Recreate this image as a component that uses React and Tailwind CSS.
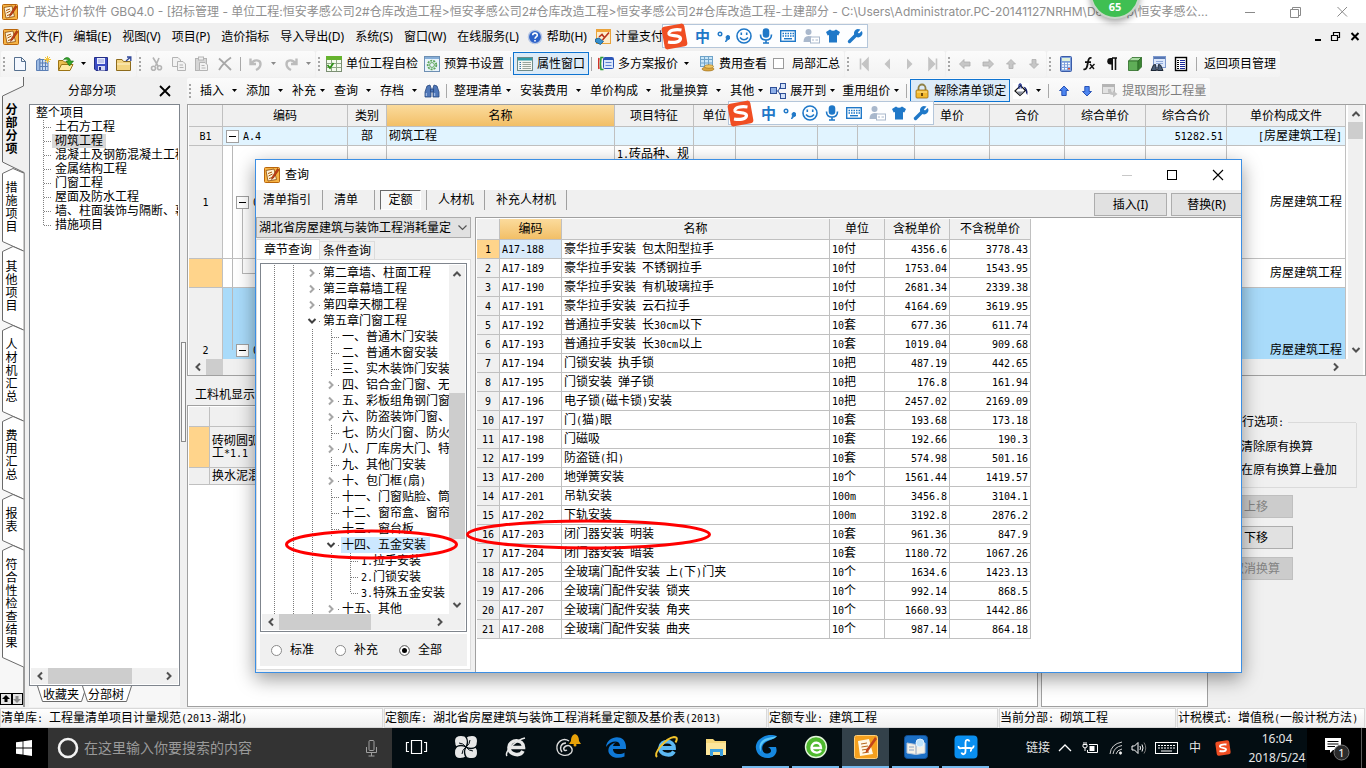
import clsx from 'clsx';

const INK = '#1f78c8';

// 16x16 glyphs used by the toolbars
const ICONS = {
    app: (
        <>
            <rect x="0.5" y="0.5" width="15" height="15" rx="1" fill="#f6b344" stroke="#b9650a" />
            <path d="M2 3.5 L10 2 L12.5 12.5 L4 14 Z" fill="#fff3d6" stroke="#8a4a0c" strokeWidth="0.8" />
            <path d="M4 6.5 l4 -1.5 M4.5 9 l4 -2 M5 11.5 l5 -1.5" stroke="#a8560e" strokeWidth="1" />
            <path d="M13.5 1.5 L8 10 L7.5 12.5 L9.5 11 L15 3 Z" fill="#c43d12" stroke="#7c2608" strokeWidth="0.5" />
        </>
    ),
    page: <path d="M2.5 1.5 H9.5 L13.5 5.5 V14.5 H2.5 Z M9.5 1.5 V5.5 H13.5" fill="#f4f8ff" stroke="#56708f" />,
    building: (
        <>
            <path d="M1.5 4.5 L5 2.5 V14.5 H1.5 Z" fill="#9dbbe3" stroke="#5b7fb5" />
            <rect x="5" y="3.5" width="8" height="11" fill="#c8dcf5" stroke="#5b7fb5" />
            <path d="M7.5 4 V14 M10.5 4 V14 M5 7 H13 M5 10.5 H13" stroke="#5b7fb5" />
            <path d="M12.5 0 V7 M9 3.5 H16 M10 1 L15 6 M15 1 L10 6" stroke="#f2c53a" />
        </>
    ),
    open: (
        <>
            <path d="M0.5 14 V4.5 H5 L6.5 6 H12 V14 Z" fill="#e9bd4f" stroke="#9c7414" />
            <path d="M0.5 14.5 L3.5 8.5 H15 L12 14.5 Z" fill="#ffe9a3" stroke="#9c7414" />
            <path d="M5.5 3.5 C8 0.5 12 1 12.5 5 H15.5 L11.5 10 L8 5 H10.3 C10 3.3 8 2.8 5.5 3.5 Z" fill="#33a62b" stroke="#146a10" strokeWidth="0.6" />
        </>
    ),
    save: (
        <>
            <path d="M1.5 1.5 H14.5 V14.5 H3 L1.5 13 Z" fill="#3d4ec4" stroke="#242e86" />
            <rect x="4" y="2" width="8" height="6" fill="#e8ecff" />
            <path d="M5 4 H11 M5 6 H11" stroke="#9aa3d6" />
            <rect x="5" y="10" width="7" height="4.5" fill="#d5d9f2" />
            <rect x="6" y="11" width="2" height="3" fill="#242e86" />
        </>
    ),
    folder: (
        <>
            <path d="M0.5 14.5 V3.5 H6 L7.5 5.5 H14.5 V14.5 Z" fill="#f3d481" stroke="#8d6b1c" />
            <path d="M1 8 H14" stroke="#fff3cc" />
            <path d="M10 5 L14 1.5 M11 1 H14.8 V5" fill="none" stroke="#334a9a" strokeWidth="1.4" />
        </>
    ),
    cut: (
        <g fill="none" stroke="#b4b4b4" strokeWidth="1.6">
            <path d="M5 1.5 L10 10 M11 2 L7.5 10" />
            <circle cx="5.5" cy="12.3" r="2" />
            <circle cx="11.5" cy="11.8" r="2" />
        </g>
    ),
    copy: (
        <g fill="#f2f2f2" stroke="#b4b4b4">
            <path d="M1.5 1.5 H7 L9.5 4 V10.5 H1.5 Z" />
            <path d="M6.5 5.5 H12 L14.5 8 V14.5 H6.5 Z M8.5 9 H12 M8.5 11.5 H12.5" />
        </g>
    ),
    paste: (
        <g fill="#f2f2f2" stroke="#b4b4b4">
            <rect x="1.5" y="2.5" width="11" height="12" fill="#d6d6d6" />
            <rect x="4.5" y="1" width="5" height="3" />
            <path d="M5.5 6.5 H11 L13.5 9 V14.5 H5.5 Z M7.5 9.5 H10.5 M7.5 12 H11.5" />
        </g>
    ),
    remove: <path d="M2 2.5 C6 6 10 10 14 14 M14 1.5 C9 5 5 9 2 14" fill="none" stroke="#a8a8a8" strokeWidth="1.8" />,
    undo: <path d="M2.5 2.5 V8 H8 M3.5 7.5 C6 3 12.5 3.5 12.5 8 C12.5 10.5 11 12.5 8 14" fill="none" stroke="#bcbcbc" strokeWidth="2.4" />,
    redo: <path d="M13.5 2.5 V8 H8 M12.5 7.5 C10 3 3.5 3.5 3.5 8 C3.5 10.5 5 12.5 8 14" fill="none" stroke="#bcbcbc" strokeWidth="2.4" />,
    check: (
        <>
            <rect x="0.5" y="0.5" width="15" height="15" fill="#f4fbee" stroke="#7c8f74" />
            <rect x="0" y="0" width="16" height="4" fill="#66b32e" />
            <path d="M1 7.5 H15 M1 11.5 H15 M5.5 4 V15 M10.5 4 V15" stroke="#8fa886" />
            <path d="M1.5 9 L4 12 L7.5 7" fill="none" stroke="#2f9216" strokeWidth="1.8" />
        </>
    ),
    gear: (
        <>
            <rect x="0.5" y="0.5" width="15" height="15" fill="#e9f3fb" stroke="#6d8fb3" />
            <path d="M1 2 H15" stroke="#86aed8" strokeWidth="2" />
            <circle cx="8" cy="9" r="4.3" fill="none" stroke="#5ca657" strokeWidth="1.8" strokeDasharray="2 1" />
            <circle cx="8" cy="9" r="2.4" fill="none" stroke="#5ca657" />
        </>
    ),
    props: (
        <>
            <rect x="0.5" y="1.5" width="15" height="13" fill="#f5f6f2" stroke="#6e8b88" />
            <rect x="1" y="2" width="14" height="2.5" fill="#2c9aa8" />
            <path d="M2.5 6.5 H4 M2.5 8.5 H4 M2.5 10.5 H4 M2.5 12.5 H4" stroke="#3a78a8" />
            <path d="M5.5 6.5 H14 M5.5 8.5 H14 M5.5 10.5 H14 M5.5 12.5 H14" stroke="#98a39a" />
        </>
    ),
    plans: (
        <>
            <path d="M1 2 Q0 8 1 13" fill="none" stroke="#d2332a" strokeWidth="1.6" />
            <path d="M5.5 1.5 H3 Q2 8 3 13.5 H5.5" fill="none" stroke="#2f9a3a" strokeWidth="1.6" />
            <rect x="5.5" y="1.5" width="10" height="11" rx="1" fill="#dbe7fb" stroke="#2c56b8" />
            <path d="M6 3 H15" stroke="#2c56b8" strokeWidth="2" />
            <path d="M7.5 6.5 H13.5 M7.5 9.5 H13.5" stroke="#5f84cf" />
        </>
    ),
    fee: (
        <>
            <rect x="1.5" y="0.5" width="12" height="10" fill="#c9e6f8" stroke="#6fa3c9" />
            <path d="M1.5 3.5 H13.5 M1.5 7 H13.5 M5.5 1 V10 M9.5 1 V10" stroke="#6fa3c9" />
            <ellipse cx="9" cy="13" rx="6" ry="2" fill="#d9a640" stroke="#9a6a14" strokeWidth="0.6" />
            <ellipse cx="10" cy="10.5" rx="4.5" ry="1.8" fill="#f0c763" stroke="#9a6a14" strokeWidth="0.6" />
        </>
    ),
    first: <path d="M4.5 2.5 V13.5 M12 2.5 L6.5 8 L12 13.5 Z" fill="#c4c4c4" stroke="#c4c4c4" strokeWidth="1.6" />,
    prev: <path d="M11 2.5 L5.5 8 L11 13.5 Z" fill="#c4c4c4" />,
    next: <path d="M5 2.5 L10.5 8 L5 13.5 Z" fill="#c4c4c4" />,
    last: <path d="M11.5 2.5 V13.5 M4 2.5 L9.5 8 L4 13.5 Z" fill="#c4c4c4" stroke="#c4c4c4" strokeWidth="1.6" />,
    left: <path d="M2.5 8 L7 3.5 V6 H13 V10 H7 V12.5 Z" fill="#c6c6c6" stroke="#adadad" strokeWidth="0.8" />,
    right: <path d="M13.5 8 L9 3.5 V6 H3 V10 H9 V12.5 Z" fill="#c6c6c6" stroke="#adadad" strokeWidth="0.8" />,
    up: <path d="M8 3.5 L12.5 8 H10 V12.5 H6 V8 H3.5 Z" fill="#c6c6c6" stroke="#adadad" strokeWidth="0.8" />,
    down: <path d="M8 12.5 L12.5 8 H10 V3.5 H6 V8 H3.5 Z" fill="#c6c6c6" stroke="#adadad" strokeWidth="0.8" />,
    calc: (
        <>
            <rect x="2.5" y="0.5" width="11" height="15" rx="1" fill="#7d9fdc" stroke="#3a5ba8" />
            <rect x="4" y="2" width="8" height="3" fill="#dff0d8" />
            <path d="M4 7.5 H12 M4 10 H12 M4 12.8 H12" stroke="#fff" strokeWidth="1.6" strokeDasharray="2 1" />
            <path d="M10 12.8 H12" stroke="#d64a3a" strokeWidth="1.6" />
        </>
    ),
    fx: (
        <g fill="none" stroke="#111">
            <path d="M10.5 2.2 C8.5 1 7.5 3 7 6 C6.4 10 5.5 14.5 2.5 13.2 M4 6.2 H10" strokeWidth="1.8" />
            <path d="M9 8 L13 13 M13.5 8 L8.5 13" strokeWidth="1.4" />
        </g>
    ),
    para: (
        <>
            <path d="M8 2 H13 M8.2 2 V14 M11.5 2 V14" stroke="#111" strokeWidth="1.6" />
            <path d="M8.5 2 H6.5 A3 3 0 0 0 6.5 8.5 H8.5 Z" fill="#111" />
        </>
    ),
    cube: (
        <g stroke="#2c6b26" strokeWidth="0.8">
            <path d="M1.5 5 L5 1.5 H14.5 L11 5 Z" fill="#a9dba2" />
            <path d="M1.5 5 H11 V14.5 H1.5 Z" fill="#5fae57" />
            <path d="M11 5 L14.5 1.5 V11 L11 14.5 Z" fill="#3a8432" />
        </g>
    ),
    find: (
        <>
            <rect x="3.5" y="0.5" width="12" height="11" fill="#dce8fb" stroke="#7c98cc" />
            <path d="M4 2 H15" stroke="#5878b4" strokeWidth="2" />
            <path d="M6 5.5 H13 M6 7.5 H13" stroke="#8ea8d8" />
            <path d="M3.5 9 L5.5 8.5 L6.5 14.5 H1 Z M10.5 9 L8.5 8.5 L7.5 14.5 H13 Z" fill="#4b5f78" stroke="#1d2736" />
        </>
    ),
    list: (
        <>
            <rect x="2.5" y="1.5" width="11" height="13" fill="#fff" stroke="#000" strokeWidth="1.4" />
            <path d="M4 4.5 H6 M4 6.5 H6 M4 8.5 H6 M4 10.5 H6 M4 12.5 H6" stroke="#000" />
            <path d="M7 4.5 H12 M7 6.5 H12 M7 8.5 H12 M7 10.5 H12 M7 12.5 H12" stroke="#1a2a9a" />
        </>
    ),
    binoculars: (
        <g fill="#4f77b8" stroke="#27467e" strokeWidth="0.8">
            <path d="M3 3 L6 2 L7 5 V14 H1 V9 Z" />
            <path d="M13 3 L10 2 L9 5 V14 H15 V9 Z" />
            <path d="M6.5 6 H9.5 V9 H6.5 Z" />
            <path d="M2.3 10 V13 M10.7 10 V13" stroke="#c9dcf8" />
        </g>
    ),
    expand: (
        <g stroke="#2f4f96">
            <path d="M5 8 H8 M8 8 L11 3 M8 8 L11 13" fill="none" />
            <rect x="0.5" y="4.5" width="6" height="6" fill="#8fb0e8" />
            <rect x="10.5" y="0.5" width="5" height="5" fill="#cfdff8" />
            <rect x="10.5" y="10.5" width="5" height="5" fill="#cfdff8" />
        </g>
    ),
    lock: (
        <>
            <path d="M4.5 8 V5 A3.5 3.5 0 0 1 11.5 5 V8" fill="none" stroke="#8f8148" strokeWidth="1.8" />
            <rect x="2" y="7" width="12" height="8" rx="1" fill="#f2b92e" stroke="#9a6a10" strokeWidth="0.8" />
            <path d="M3 9 H13" stroke="#ffe391" />
            <path d="M8 10 V13" stroke="#5e3d06" strokeWidth="1.8" />
        </>
    ),
    bucket: (
        <>
            <rect width="16" height="16" fill="#fff" />
            <path d="M2 8 L7.5 2.5 L12.5 7.5 L7 12.5 Z" fill="#fff" stroke="#111" strokeWidth="1.2" />
            <path d="M3.5 8.5 H11.5 L7 12 Z" fill="#8a8f9c" />
            <path d="M6 6 V2 Q7 0 8.2 1.8 V5.5" fill="none" stroke="#1c2f8c" strokeWidth="1.2" />
            <path d="M10.5 3.5 Q15.5 5 14.3 12 Q12.5 10 12.8 7.5 Z" fill="#14206e" />
        </>
    ),
    blueUp: <path d="M8 3 L12.5 7.5 H10.2 V12.5 H5.8 V7.5 H3.5 Z" fill="#4e86f0" stroke="#1c47b0" strokeWidth="0.9" />,
    blueDown: <path d="M8 13 L12.5 8.5 H10.2 V3.5 H5.8 V8.5 H3.5 Z" fill="#4e86f0" stroke="#1c47b0" strokeWidth="0.9" />,
    extract: (
        <>
            <rect x="0.5" y="1.5" width="12" height="9" fill="#e2e2e2" stroke="#b5b5b5" />
            <path d="M1 3 H12" stroke="#b5b5b5" strokeWidth="2" />
            <path d="M6 6 V9 Q7 12 11 12 V14.5 L15.5 11 L11 7.5 V9.5 Q9 9.5 9 6 Z" fill="#c2c2c2" />
        </>
    ),
    help: (
        <>
            <circle cx="8" cy="8" r="6.6" fill="#2d62c8" stroke="#b9c8e4" strokeWidth="1.4" />
            <path d="M5.7 6.3 C5.7 3.3 10.4 3.4 10.3 6.2 C10.2 8 8 7.8 8 9.8 M8 11 V12.5" fill="none" stroke="#fff" strokeWidth="1.6" />
        </>
    ),
    pay: (
        <>
            <rect x="1.5" y="0.5" width="14" height="14" fill="#fdeccc" stroke="#e9a23a" />
            <path d="M2 2 H15" stroke="#f2a63a" strokeWidth="2" />
            <path d="M4 8 L7 5.5 L9 8 M14 3.5 L7.5 11" fill="none" stroke="#b8321a" strokeWidth="1.6" />
            <path d="M0.5 10 L4 9 L8.5 12.5 L5.5 15.5 L0.5 13 Z" fill="#3590cf" stroke="#145a8c" strokeWidth="0.8" />
        </>
    ),
};

function Icon({ name, size = 16, className }) {
    return (
        <svg width={size} height={size} viewBox="0 0 16 16" className={clsx('shrink-0', className)} aria-hidden="true">
            {ICONS[name]}
        </svg>
    );
}

// Song-style text: latin runs are half as wide as the hanzi
function Song({ children }) {
    return (
        <span>
            {String(children).split(/([\x20-\x7e]+)/).map((part, i) =>
                i % 2 ? (
                    <span key={i} className="whitespace-pre font-[family-name:'DejaVu_Sans_Mono','Noto_Sans_CJK_SC',monospace] text-[10px]">{part}</span>
                ) : part
            )}
        </span>
    );
}

const Caret = ({ color = '#000' }) => (
    <svg width="5" height="3" viewBox="0 0 5 3" className="shrink-0" aria-hidden="true">
        <path d="M0 0 H5 L2.5 3 Z" fill={color} />
    </svg>
);

const Grip = () => (
    <svg width="2" height="14" viewBox="0 0 2 14" className="shrink-0" aria-hidden="true">
        <path d="M1 0 V14" stroke="#a6a6a6" strokeWidth="2" strokeDasharray="2 2" />
    </svg>
);

const Sep = () => <span className="h-[14px] w-px shrink-0 bg-[#a8a8a8]" />;

function Band({ className, children }) {
    return (
        <div className={clsx('flex h-[26px] shrink-0 items-center rounded-xs bg-linear-to-b from-[#fbfbfb] to-[#f3f3f3] pr-1 pl-[2px]', className)}>
            <Grip />
            {children}
        </div>
    );
}

function Tool({ icon, label, className }) {
    return (
        <button type="button" aria-label={label || icon} className={clsx('flex shrink-0 items-center gap-1 whitespace-nowrap', className)}>
            {icon && <Icon name={icon} />}
            {label}
        </button>
    );
}

function Drop({ label, icon, tight, className }) {
    return (
        <button type="button" className={clsx('flex shrink-0 items-center whitespace-nowrap', tight ? 'gap-1' : 'gap-2', className)}>
            {icon && <Icon name={icon} />}
            {label}
            <Caret />
        </button>
    );
}

const ACTIVE = 'h-[23px] border border-[#0f74d1] bg-[#dcebf8] px-[3px]';

// "‹" style arrow of the scroll bars
const TURN = { left: 'rotate-90', right: '-rotate-90', up: 'rotate-180', down: '' };
function Chevron({ dir, color = '#505050' }) {
    return (
        <svg width="10" height="10" viewBox="0 0 10 10" className={clsx('shrink-0', TURN[dir])} aria-hidden="true">
            <path d="M1.5 3 L5 6.5 L8.5 3" fill="none" stroke={color} strokeWidth="2" />
        </svg>
    );
}

function HScroll({ thumb, className }) {
    return (
        <div className={clsx('flex h-4 shrink-0 items-center bg-[#f0f0f0] px-1', className)}>
            <Chevron dir="left" />
            <div className="flex h-full flex-1 px-[3px]">
                <span className={clsx('h-full bg-[#cdcdcd]', thumb)} />
            </div>
            <Chevron dir="right" />
        </div>
    );
}

function ImeBar({ className }) {
    return (
        <div className={clsx('absolute z-30 flex h-[24px] items-center border border-[#b4c6da] bg-[#fdfeff] pr-1', className)}>
            <svg width="29" height="29" viewBox="0 0 29 29" className="-ml-[3px] shrink-0" aria-hidden="true">
                <rect x="3" y="3" width="23" height="23" rx="3" fill="#f04e23" transform="rotate(-10 14.5 14.5)" />
                <path d="M21.5 8 C15 7 8 8.5 9 12 C10 14.5 20.5 12.5 20.5 16.5 C20.5 20.5 13 21 8 20" fill="none" stroke="#fff" strokeWidth="3.2" />
            </svg>
            <div className="flex flex-1 items-center justify-between pl-[6px] text-[15px] font-bold text-[#1f78c8]">
                <span>中</span>
                <svg width="13" height="16" viewBox="0 0 13 16" aria-hidden="true">
                    <circle cx="3" cy="6" r="1.8" fill="none" stroke={INK} strokeWidth="1.4" />
                    <path d="M9 9 A2 2 0 1 1 11 11.5 L8.5 14 L9.5 11 Z" fill={INK} stroke={INK} />
                </svg>
                <svg width="16" height="16" viewBox="0 0 16 16" fill="none" stroke={INK} strokeWidth="1.6" aria-hidden="true">
                    <circle cx="8" cy="8" r="7" />
                    <path d="M5.3 4.5 V7 M10.7 4.5 V7 M4 9.5 Q8 14 12 9.5" />
                </svg>
                <svg width="14" height="16" viewBox="0 0 14 16" fill="none" stroke={INK} strokeWidth="1.6" aria-hidden="true">
                    <rect x="4.5" y="1" width="5" height="8" rx="2.5" fill={INK} />
                    <path d="M1.5 6.5 Q1.5 12 7 12 Q12.5 12 12.5 6.5 M7 12 V15 M4 15 H10" />
                </svg>
                <svg width="16" height="12" viewBox="0 0 16 12" aria-hidden="true">
                    <rect x="0.7" y="0.7" width="14.6" height="10.6" fill="#fff" stroke={INK} strokeWidth="1.4" />
                    <path d="M2.5 3.5 H14 M2.5 6 H14" stroke={INK} strokeWidth="1.4" strokeDasharray="1.5 1" />
                    <path d="M4 8.7 H12" stroke={INK} strokeWidth="1.4" />
                </svg>
                <svg width="17" height="16" viewBox="0 0 17 16" aria-hidden="true">
                    <circle cx="5.5" cy="4" r="3" fill="#a9b8cc" />
                    <path d="M0.5 14 Q0.5 8 5.5 8 Q8 8 9 9 V14 Z" fill="#a9b8cc" />
                    <rect x="7.5" y="9" width="9" height="6" fill="#fff" stroke="#a9b8cc" />
                    <path d="M9 12 H11 M12.5 12 H15" stroke="#a9b8cc" />
                </svg>
                <svg width="14" height="14" viewBox="0 0 14 14" aria-hidden="true">
                    <path d="M4 0.5 Q7 3 10 0.5 L14 3 L12.3 6.5 L11 6 V13.5 H3 V6 L1.7 6.5 L0 3 Z" fill={INK} />
                </svg>
                <svg width="16" height="16" viewBox="0 0 16 16" aria-hidden="true">
                    <path d="M2.5 13.5 L9 7" stroke={INK} strokeWidth="3.4" strokeLinecap="round" />
                    <path d="M13.5 1.5 L10.8 4.5 L12 5.5 L14.8 3 A4.2 4.2 0 1 1 10.8 1 L13.5 1.5 Z" fill={INK} />
                </svg>
            </div>
        </div>
    );
}

const MENUS = ['文件(F)', '编辑(E)', '视图(V)', '项目(P)', '造价指标', '导入导出(D)', '系统(S)', '窗口(W)', '在线服务(L)'];

function TitleBar() {
    return (
        <header className="flex h-[23px] shrink-0 items-center bg-white pr-[18px] pl-[2px] text-[#8f8f8f]">
            <Icon name="app" />
            <h1 className="ml-[5px] flex-1 truncate font-[family-name:Inter,'Noto_Sans_CJK_SC',sans-serif]">
                广联达计价软件 GBQ4.0 - [招标管理 - 单位工程:恒安孝感公司2#仓库改造工程&gt;恒安孝感公司2#仓库改造工程&gt;恒安孝感公司2#仓库改造工程-土建部分 - C:\Users\Administrator.PC-20141127NRHM\Desktop\恒安孝感公...
            </h1>
            <svg width="104" height="12" viewBox="0 0 104 12" fill="none" stroke="#8a8a8a" className="ml-[20px] shrink-0" aria-hidden="true">
                <path d="M1 6.5 H11 M93.5 1 L103 10.5 M103 1 L93.5 10.5" />
                <path d="M46.5 3.5 H54.5 V11.5 H46.5 Z M48.5 3 V1.5 H56.5 V9.5 H55" />
            </svg>
        </header>
    );
}

function MenuBar() {
    return (
        <nav className="flex h-[27px] shrink-0 items-center gap-[11px] bg-[#f0f0f0] pr-[6px] pl-[3px]">
            <Icon name="app" className="-mr-[5px]" />
            {MENUS.map((m) => <button type="button" key={m} className="shrink-0">{m}</button>)}
            <Tool icon="help" label="帮助(H)" className="-ml-[3px]" />
            <Tool icon="pay" label="计量支付" className="-ml-[3px]" />
            <svg width="45" height="11" viewBox="0 0 45 11" fill="none" stroke="#000" className="ml-auto shrink-0" aria-hidden="true">
                <path d="M0 9 H6 M36.5 2 L43.5 9 M43.5 2 L36.5 9" strokeWidth="2" />
                <path d="M16.5 4.5 H22.5 V9.5 H16.5 Z M18.5 4 V1.5 H24.5 V6.5 H23" strokeWidth="1.2" />
            </svg>
        </nav>
    );
}

function MainToolbar() {
    return (
        <div className="flex h-[27px] shrink-0 items-center gap-px bg-[#f0f0f0] pl-px">
            <Band className="gap-[7px]">
                <Tool icon="page" />
                <Tool icon="building" />
                <Tool icon="open" />
                <Caret />
                <Tool icon="save" />
                <Tool icon="folder" />
            </Band>
            <Band className="gap-[7px]">
                <Tool icon="cut" />
                <Tool icon="copy" />
                <Tool icon="paste" />
                <Tool icon="remove" />
                <Sep />
                <Tool icon="undo" />
                <Caret color="#8a8a8a" />
                <Tool icon="redo" />
                <Caret color="#8a8a8a" />
            </Band>
            <Band className="gap-[6px]">
                <Tool icon="check" label="单位工程自检" />
                <Tool icon="gear" label="预算书设置" />
                <Sep />
                <Tool icon="props" label="属性窗口" className={clsx(ACTIVE, '-mx-1')} />
                <Sep />
                <Tool icon="plans" label="多方案报价" />
                <Caret />
                <Tool icon="fee" label="费用查看" className="ml-1" />
                <label className="flex shrink-0 items-center gap-2">
                    <input type="checkbox" className="size-[11px] appearance-none border border-[#9a9a9a] bg-white" />
                    局部汇总
                </label>
            </Band>
            <Band className="gap-[7px]">
                <Tool icon="first" />
                <Tool icon="prev" />
                <Tool icon="next" />
                <Tool icon="last" />
            </Band>
            <Band className="gap-[7px]">
                <Tool icon="left" />
                <Tool icon="right" />
                <Tool icon="up" />
                <Tool icon="down" />
            </Band>
            <Band className="gap-[7px]">
                <Tool icon="calc" />
                <Tool icon="fx" />
                <Tool icon="para" />
                <Tool icon="cube" />
                <Tool icon="find" />
                <Tool icon="list" />
                <Sep />
                <Tool label="返回项目管理" />
            </Band>
        </div>
    );
}

function EditToolbar() {
    return (
        <div className="flex h-[27px] shrink-0 items-center bg-[#f0f0f0]">
            <Band className="gap-[9px]">
                <Drop label="插入" />
                <Drop label="添加" />
                <Drop label="补充" tight />
                <Drop label="查询" />
                <Drop label="存档" />
                <div className="-mx-[2px] flex items-center gap-[6px]">
                    <Tool icon="binoculars" />
                    <Sep />
                </div>
                <Drop label="整理清单" tight />
                <Drop label="安装费用" />
                <Drop label="单价构成" />
                <Drop label="批量换算" />
                <Drop label="其他" tight />
                <div className="-ml-[2px] flex items-center gap-[7px]">
                    <Drop icon="expand" label="展开到" tight />
                    <Drop label="重用组价" tight />
                    <Sep />
                    <Tool icon="lock" label="解除清单锁定" className={clsx(ACTIVE, '-mx-1')} />
                    <Tool icon="bucket" />
                    <Caret />
                    <Sep />
                    <Tool icon="blueUp" />
                    <Tool icon="blueDown" />
                    <Tool icon="extract" label="提取图形工程量" className="text-[#7d7d7d]" />
                </div>
            </Band>
        </div>
    );
}

const SIDE_TABS = [
    { text: '措施项目', h: 78 },
    { text: '其他项目', h: 79 },
    { text: '人材机汇总', h: 91 },
    { text: '费用汇总', h: 78 },
    { text: '报表', h: 51 },
    { text: '符合性检查结果', h: 117 },
];

function SideTabs() {
    return (
        <nav className="flex w-[25px] shrink-0 flex-col border-r-2 border-[#9a9a9a] bg-[#f7f7f7]">
            <button type="button" className="relative h-[91px] shrink-0 pt-[12px] font-bold">
                <svg width="25" height="96" viewBox="0 0 25 96" className="absolute top-0 left-0" aria-hidden="true">
                    <path d="M23.5 0 V9 L2.5 19 V85 L24 95.5 H25 V0 Z" fill="#f0f0f0" />
                    <path d="M23.5 0 V9 L2.5 19 V85 L24 95.5" fill="none" stroke="#6a6a6a" />
                </svg>
                <span className="relative mx-auto block w-[12px] leading-[13px] break-all">分部分项</span>
            </button>
            {SIDE_TABS.map(({ text, h }) => (
                <button type="button" key={text} className="relative shrink-0" style={{ height: h }}>
                    <svg width="24" height={h + 6} viewBox={`0 0 24 ${h + 6}`} className="absolute top-0 left-0" aria-hidden="true">
                        <path d={`M23.5 5 L13 0.5 L2.5 5.5 V${h - 4.5} L23.5 ${h + 5}`} fill="#fff" stroke="#6a6a6a" />
                    </svg>
                    <span className="relative mx-auto block w-[12px] leading-[13px] break-all">{text}</span>
                </button>
            ))}
            <div className="mt-auto mb-[2px] flex">
                {['up', 'down'].map((d) => (
                    <button type="button" key={d} aria-label={d} className="flex h-[12px] w-[12px] items-center justify-center border border-black bg-[#e4e4e4]">
                        <svg width="8" height="8" viewBox="0 0 8 8" className={d === 'down' ? 'rotate-180' : ''} aria-hidden="true">
                            <path d="M4 0 L8 4 H5.5 V7 H2.5 V4 H0 Z" fill={d === 'down' ? '#8a8a8a' : '#000'} />
                        </svg>
                    </button>
                ))}
            </div>
        </nav>
    );
}

const SECTIONS = ['土石方工程', '砌筑工程', '混凝土及钢筋混凝土工程', '金属结构工程', '门窗工程', '屋面及防水工程', '墙、柱面装饰与隔断、幕墙工程', '措施项目'];

function SectionPanel() {
    return (
        <aside className="ml-1 flex w-[151px] shrink-0 flex-col">
            <div className="flex h-[27px] shrink-0 items-center">
                <h2 className="flex-1 pl-[39px]">分部分项</h2>
                <button type="button" aria-label="关闭" className="mr-[9px]">
                    <svg width="12" height="12" viewBox="0 0 12 12" aria-hidden="true">
                        <path d="M1 1 L11 11 M11 1 L1 11" stroke="#000" strokeWidth="1.8" />
                    </svg>
                </button>
            </div>
            <div className="flex flex-1 flex-col border border-[#7f858d] bg-white p-px">
                <div className="flex-1 overflow-hidden pl-[5px] leading-[14px] whitespace-nowrap">
                    <p>整个项目</p>
                    <ul>
                        {SECTIONS.map((s, i) => (
                            <li key={s} className="flex h-[14px] items-center">
                                <svg width="16" height="14" viewBox="0 0 16 14" className="shrink-0" aria-hidden="true">
                                    <path d={i === SECTIONS.length - 1 ? 'M7.5 0 V7' : 'M7.5 0 V14'} stroke="#808080" strokeDasharray="1 1" />
                                    <path d="M8 7.5 H16" stroke="#808080" strokeDasharray="1 1" />
                                </svg>
                                <span className={clsx('h-[14px] px-[3px]', s === '砌筑工程' && 'bg-[#d8d8d8]')}>{s}</span>
                            </li>
                        ))}
                    </ul>
                </div>
                <HScroll thumb="w-[84px]" />
            </div>
            <div className="flex h-[21px] shrink-0 items-start bg-[#f7f7f7] pl-2">
                {['收藏夹', '分部树'].map((t) => (
                    <button type="button" key={t} className="relative h-[17px] w-[45px]">
                        <svg width="50" height="17" viewBox="0 0 50 17" className="absolute top-0 left-0" aria-hidden="true">
                            <path d="M0.5 0 L5.5 15.5 H44.5 L49.5 0" fill="#fff" stroke="#6a6a6a" />
                        </svg>
                        <span className="relative pl-[3px] leading-[16px]">{t}</span>
                    </button>
                ))}
            </div>
        </aside>
    );
}

const TH = 'border-r border-b border-[#c0c0c0] bg-[#f0f0f0] p-0 text-center font-normal';
const TD = 'border-r border-b border-[#c0c0c0] p-0';
const HEAD = 'bg-linear-to-b from-[#fbdb9c] to-[#f2bf66]';

const Minus = ({ className }) => (
    <span className={clsx('absolute flex size-[13px] items-center justify-center border border-[#a0a0a0] bg-white', className)}>
        <span className="h-px w-[7px] bg-black" />
    </span>
);

const PRICE_COLS = ['编码', '类别', '名称', '项目特征', '单位', '', '', '', '单价', '合价', '综合单价', '综合合价', '单价构成文件'];

function Blank({ n, className }) {
    return Array.from({ length: n }, (_, i) => <td key={i} className={clsx(TD, className)} />);
}

function PriceGrid() {
    return (
        <section className="flex h-[272px] shrink-0 flex-col border border-[#a0a0a0] bg-white pr-[2px] pl-px">
            <div className="flex min-h-0 flex-1">
                <div className="min-w-0 flex-1 overflow-hidden">
                    <table className="w-full table-fixed border-separate border-spacing-0">
                        <colgroup>
                            <col className="w-[34px]" />
                            <col className="w-[125px]" />
                            <col className="w-[39px]" />
                            <col />
                            <col className="w-[79px]" />
                            <col className="w-[42px]" />
                            <col className="w-[82px]" />
                            <col className="w-[40px]" />
                            <col className="w-[57px]" />
                            <col className="w-[75px]" />
                            <col className="w-[75px]" />
                            <col className="w-[81px]" />
                            <col className="w-[81px]" />
                            <col className="w-[119px]" />
                        </colgroup>
                        <thead>
                            <tr className="h-[22px]">
                                <th className={TH} />
                                {PRICE_COLS.map((c, i) => (
                                    <th key={i} scope="col" className={clsx(TH, c === '名称' && HEAD)}>{c}</th>
                                ))}
                            </tr>
                        </thead>
                        <tbody>
                            <tr className="h-[19px] bg-[#e1f4ff]">
                                <th scope="row" className={TH}><Song>B1</Song></th>
                                <td className={clsx(TD, 'relative pl-[20px]')}>
                                    <Minus className="top-[3px] left-[3px]" />
                                    <Song>A.4</Song>
                                </td>
                                <td className={clsx(TD, 'text-center')}>部</td>
                                <td className={clsx(TD, 'pl-[2px]')}>砌筑工程</td>
                                <Blank n={8} />
                                <td className={clsx(TD, 'pr-[3px] text-right')}><Song>51282.51</Song></td>
                                <td className={clsx(TD, 'pr-[3px] text-right')}><Song>[房屋建筑工程]</Song></td>
                            </tr>
                            <tr className="h-[113px]">
                                <th scope="row" className={TH}><Song>1</Song></th>
                                <td className={clsx(TD, 'relative pl-[30px]')}>
                                    <span className="absolute inset-y-0 left-[9px] w-px bg-[#b8b8b8]" />
                                    <span className="absolute bottom-0 left-[19px] h-[50px] w-px bg-[#b8b8b8]" />
                                    <Minus className="top-[50px] left-[13px]" />
                                    <Song>0</Song>
                                </td>
                                <td className={TD} />
                                <td className={TD} />
                                <td className={clsx(TD, 'pl-[2px] align-top')}><Song>1.砖品种、规</Song></td>
                                <Blank n={8} />
                                <td className={clsx(TD, 'pr-[3px] text-right')}>房屋建筑工程</td>
                            </tr>
                            <tr className="h-[29px]">
                                <th className={clsx(TD, 'bg-[#ffd48b]')} />
                                <td className={clsx(TD, 'relative')}>
                                    <span className="absolute inset-y-0 left-[9px] w-px bg-[#b8b8b8]" />
                                    <span className="absolute top-0 right-0 left-[19px] h-[15px] border-b border-l border-[#b8b8b8]" />
                                </td>
                                <Blank n={11} />
                                <td className={clsx(TD, 'pr-[3px] text-right')}>房屋建筑工程</td>
                            </tr>
                            <tr className="h-[125px] bg-[#a9dbfa]">
                                <th scope="row" className={TH}><Song>2</Song></th>
                                <td className={clsx(TD, 'relative pl-[30px]')}>
                                    <span className="absolute top-0 left-[9px] h-[62px] w-px bg-[#b8b8b8]" />
                                    <Minus className="top-[56px] left-[13px]" />
                                    <Song>0</Song>
                                </td>
                                <Blank n={11} />
                                <td className={clsx(TD, 'pr-[3px] text-right')}>房屋建筑工程</td>
                            </tr>
                        </tbody>
                    </table>
                </div>
                <div className="ml-[2px] flex w-[15px] shrink-0 flex-col items-center bg-[#f0f0f0] py-1">
                    <Chevron dir="up" />
                    <span className="mt-[3px] h-[17px] w-full bg-[#cdcdcd]" />
                    <span className="flex-1" />
                    <Chevron dir="down" />
                </div>
            </div>
            <HScroll thumb="w-[17px]" className="pr-[22px]" />
        </section>
    );
}

const SIDE_BTN = 'h-[23px] w-[74px] border';

function ResourcePanel() {
    return (
        <section className="flex min-h-0 flex-1 flex-col">
            <h2 className="flex h-[29px] shrink-0 items-center pt-2 pl-2">工料机显示</h2>
            <div className="flex min-h-0 flex-1">
                <div className="flex-1 border border-[#a0a0a0] bg-white p-px">
                    <table className="w-full border-separate border-spacing-0 leading-[12px]">
                        <thead>
                            <tr className="h-[20px]">
                                <th className={clsx(TH, 'w-[21px]')} />
                                <th className={TH} />
                            </tr>
                        </thead>
                        <tbody className="bg-[#f0f0f0]">
                            <tr className="h-[41px]">
                                <td className={clsx(TD, 'bg-[#ffd48b]')} />
                                <td className={clsx(TD, 'pl-[2px]')}>砖砌圆弧<br /><Song>工*1.1</Song></td>
                            </tr>
                            <tr className="h-[17px]">
                                <td className={TD} />
                                <td className={clsx(TD, 'pl-[2px]')}>换水泥混</td>
                            </tr>
                        </tbody>
                    </table>
                </div>
                <div className="ml-[3px] w-[167px] shrink-0 border border-[#a0a0a0] bg-white" />
                <div className="w-[158px] shrink-0 pt-[9px] pr-[9px]">
                    <fieldset className="relative h-[74px] border border-t-0 border-l-0 border-[#dadada]">
                        <legend className="flex w-full items-center gap-1 pl-[22px] leading-[16px]">
                            <Song>执行选项:</Song>
                            <span className="h-px flex-1 bg-[#dadada]" />
                        </legend>
                        <div className="flex flex-col gap-[7px] pt-2">
                            {['清除原有换算', '在原有换算上叠加'].map((t) => (
                                <label key={t} className="flex h-4 items-center gap-[3px] pl-[18px]">
                                    <input type="radio" name="mode" className="size-[12px]" />
                                    {t}
                                </label>
                            ))}
                        </div>
                    </fieldset>
                    <div className="mt-[7px] flex flex-col gap-2 pl-[11px]">
                        <button type="button" disabled className={clsx(SIDE_BTN, 'border-[#bfbfbf] bg-[#cccccc] text-[#838383]')}>上移</button>
                        <button type="button" className={clsx(SIDE_BTN, 'border-[#adadad] bg-[#e1e1e1]')}>下移</button>
                        <button type="button" disabled className={clsx(SIDE_BTN, 'border-[#bfbfbf] bg-[#cccccc] text-[#838383]')}>取消换算</button>
                    </div>
                </div>
            </div>
        </section>
    );
}

// level 2: chapters, 3: sections, 4: leaves under an opened section
const CHAPTERS = [
    { level: 2, text: '第二章墙、柱面工程', mark: 'right' },
    { level: 2, text: '第三章幕墙工程', mark: 'right' },
    { level: 2, text: '第四章天棚工程', mark: 'right' },
    { level: 2, text: '第五章门窗工程', mark: 'down' },
    { level: 3, text: '一、普通木门安装' },
    { level: 3, text: '二、普通木窗安装' },
    { level: 3, text: '三、实木装饰门安装' },
    { level: 3, text: '四、铝合金门窗、无', mark: 'right' },
    { level: 3, text: '五、彩板组角钢门窗', mark: 'right' },
    { level: 3, text: '六、防盗装饰门窗、', mark: 'right' },
    { level: 3, text: '七、防火门窗、防火' },
    { level: 3, text: '八、厂库房大门、特', mark: 'right' },
    { level: 3, text: '九、其他门安装' },
    { level: 3, text: '十、包门框(扇)', mark: 'right' },
    { level: 3, text: '十一、门窗贴脸、筒' },
    { level: 3, text: '十二、窗帘盒、窗帘' },
    { level: 3, text: '十三、窗台板' },
    { level: 3, text: '十四、五金安装', mark: 'down', selected: true },
    { level: 4, text: '1.拉手安装' },
    { level: 4, text: '2.门锁安装' },
    { level: 4, text: '3.特殊五金安装', end: true },
    { level: 3, text: '十五、其他', mark: 'right' },
];

function Guide({ d }) {
    return (
        <svg width="19" height="16" viewBox="0 0 19 16" className="shrink-0" aria-hidden="true">
            {d.map((p) => <path key={p} d={p} stroke="#7a7a7a" strokeDasharray="1 1" />)}
        </svg>
    );
}

function ChapterRow({ level, text, mark, selected, end }) {
    return (
        <li className="flex h-4 items-center whitespace-nowrap">
            {Array.from({ length: level }, (_, i) => <Guide key={i} d={['M9.5 0 V16']} />)}
            {mark ? (
                <span className="flex w-[19px] shrink-0 items-center justify-between pr-[2px] pl-1">
                    <Chevron dir={mark} color={mark === 'down' ? '#404040' : '#a6a6a6'} />
                    <span className="size-px bg-[#7a7a7a]" />
                </span>
            ) : (
                <Guide d={[end ? 'M9.5 0 V8' : 'M9.5 0 V16', 'M10 8.5 H18']} />
            )}
            <span className={clsx('h-4 pl-px leading-4', selected && 'bg-[#cce8ff] pr-1')}>
                <Song>{text}</Song>
            </span>
        </li>
    );
}

const QUOTAS = [
    ['A17-188', '豪华拉手安装 包太阳型拉手', '10付', '4356.6', '3778.43'],
    ['A17-189', '豪华拉手安装 不锈钢拉手', '10付', '1753.04', '1543.95'],
    ['A17-190', '豪华拉手安装 有机玻璃拉手', '10付', '2681.34', '2339.38'],
    ['A17-191', '豪华拉手安装 云石拉手', '10付', '4164.69', '3619.95'],
    ['A17-192', '普通拉手安装 长30cm以下', '10套', '677.36', '611.74'],
    ['A17-193', '普通拉手安装 长30cm以上', '10套', '1019.04', '909.68'],
    ['A17-194', '门锁安装 执手锁', '10把', '487.19', '442.65'],
    ['A17-195', '门锁安装 弹子锁', '10把', '176.8', '161.94'],
    ['A17-196', '电子锁(磁卡锁)安装', '10把', '2457.02', '2169.09'],
    ['A17-197', '门(猫)眼', '10套', '193.68', '173.18'],
    ['A17-198', '门磁吸', '10套', '192.66', '190.3'],
    ['A17-199', '防盗链(扣)', '10套', '574.98', '501.16'],
    ['A17-200', '地弹簧安装', '10个', '1561.44', '1419.57'],
    ['A17-201', '吊轨安装', '100m', '3456.8', '3104.1'],
    ['A17-202', '下轨安装', '100m', '3192.8', '2876.2'],
    ['A17-203', '闭门器安装 明装', '10套', '961.36', '847.9'],
    ['A17-204', '闭门器安装 暗装', '10套', '1180.72', '1067.26'],
    ['A17-205', '全玻璃门配件安装 上(下)门夹', '10个', '1634.6', '1423.13'],
    ['A17-206', '全玻璃门配件安装 锁夹', '10个', '992.14', '868.5'],
    ['A17-207', '全玻璃门配件安装 角夹', '10个', '1660.93', '1442.86'],
    ['A17-208', '全玻璃门配件安装 曲夹', '10个', '987.14', '864.18'],
];

function QuotaTable() {
    return (
        <table className="w-[554px] table-fixed border-separate border-spacing-0 leading-[16px]">
            <colgroup>
                <col className="w-[23px]" />
                <col className="w-[62px]" />
                <col />
                <col className="w-[55px]" />
                <col className="w-[65px]" />
                <col className="w-[81px]" />
            </colgroup>
            <thead>
                <tr className="h-[21px]">
                    <th className={TH} />
                    <th scope="col" className={clsx(TH, HEAD)}>编码</th>
                    {['名称', '单位', '含税单价', '不含税单价'].map((c) => <th key={c} scope="col" className={TH}>{c}</th>)}
                </tr>
            </thead>
            <tbody>
                {QUOTAS.map(([code, name, unit, taxed, untaxed], i) => (
                    <tr key={code} className="h-[19px]">
                        <th scope="row" className={clsx(TH, i === 0 && 'bg-[#ffd48b]')}><Song>{i + 1}</Song></th>
                        <td className={clsx(TD, 'pl-[2px]', i === 0 && 'bg-[#d9eafa]')}><Song>{code}</Song></td>
                        <td className={clsx(TD, 'pl-[2px]')}><Song>{name}</Song></td>
                        <td className={clsx(TD, 'pl-[2px]')}><Song>{unit}</Song></td>
                        <td className={clsx(TD, 'pr-[2px] text-right')}><Song>{taxed}</Song></td>
                        <td className={clsx(TD, 'pr-[2px] text-right')}><Song>{untaxed}</Song></td>
                    </tr>
                ))}
            </tbody>
        </table>
    );
}

const DIALOG_TABS = ['清单指引', '清单', '定额', '人材机', '补充人材机'];

function QueryDialog() {
    return (
        <div role="dialog" aria-label="查询" className="absolute top-[159px] left-[255px] z-20 flex h-[514px] w-[987px] flex-col border border-[#3c8fe4] bg-[#f0f0f0] shadow-[0_6px_18px_rgba(0,0,0,0.4)]">
            <div className="flex h-[30px] shrink-0 items-center bg-white pr-[17px] pl-2">
                <Icon name="app" />
                <h2 className="ml-[5px] flex-1">查询</h2>
                <svg width="103" height="12" viewBox="0 0 103 12" fill="none" aria-hidden="true">
                    <path d="M1 6.5 H11" stroke="#c8c8c8" />
                    <rect x="46.5" y="1.5" width="9" height="9" stroke="#000" />
                    <path d="M92 1 L102 11 M102 1 L92 11" stroke="#000" strokeWidth="1.1" />
                </svg>
            </div>
            <div className="flex h-[27px] shrink-0 items-start">
                {DIALOG_TABS.map((t) =>
                    t === '定额' ? (
                        <span key={t} className="flex h-[20px] items-center border-r border-[#a0a0a0] px-[5px]">
                            <button type="button" className="h-[20px] w-[41px] border border-t-[#696969] border-r-white border-b-white border-l-[#696969] bg-[#f8f8f8]">{t}</button>
                        </span>
                    ) : (
                        <button type="button" key={t} className={clsx('h-[20px] border-r border-[#a0a0a0]', t === '清单指引' ? 'pr-[11px] pl-[7px]' : t === '清单' ? 'pr-[16px] pl-[11px]' : 'pr-[10px] pl-[11px]')}>{t}</button>
                    )
                )}
                <div className="ml-auto flex gap-1 pt-[3px]">
                    <button type="button" className="h-[23px] w-[73px] border border-[#adadad] bg-[#e1e1e1]">插入(I)</button>
                    <button type="button" className="h-[23px] w-[70px] border border-r-0 border-[#adadad] bg-[#e1e1e1]">替换(R)</button>
                </div>
            </div>
            <div className="flex min-h-0 flex-1">
                <div className="flex w-[215px] shrink-0 flex-col">
                    <div className="relative shrink-0">
                        <select aria-label="定额库" className="block h-[21px] w-full appearance-none border border-[#adadad] bg-[#e1e1e1] pl-[2px] text-[12px]">
                            <option>湖北省房屋建筑与装饰工程消耗量定</option>
                        </select>
                        <svg width="9" height="6" viewBox="0 0 9 6" className="pointer-events-none absolute top-[8px] right-[4px]" aria-hidden="true">
                            <path d="M0.5 0.5 L4.5 4.5 L8.5 0.5" fill="none" stroke="#555" strokeWidth="1.2" />
                        </svg>
                    </div>
                    <div className="flex h-[21px] shrink-0 items-end">
                        <button type="button" className="h-[20px] border border-b-0 border-[#dcdcdc] bg-white px-[7px]">章节查询</button>
                        <button type="button" className="h-[18px] border border-b-0 border-l-0 border-[#dcdcdc] px-[3px]">条件查询</button>
                    </div>
                    <div className="mb-[2px] flex min-h-0 flex-1 flex-col border border-[#dcdcdc] bg-white p-[3px]">
                        <div className="flex h-[369px] flex-col border border-[#7f858d] p-px">
                            <div className="flex min-h-0 flex-1">
                                <ul className="min-w-0 flex-1 overflow-hidden pl-[3px]">
                                    {CHAPTERS.map((c) => <ChapterRow key={c.text} {...c} />)}
                                </ul>
                                <div className="flex w-[16px] shrink-0 flex-col items-center bg-[#f0f0f0] py-1">
                                    <Chevron dir="up" />
                                    <span className="mt-[114px] h-[146px] w-full bg-[#cdcdcd]" />
                                    <span className="flex-1" />
                                    <Chevron dir="down" />
                                </div>
                            </div>
                            <HScroll thumb="w-[92px]" className="pr-[20px]" />
                        </div>
                        <div className="mt-[2px] flex flex-1 items-center gap-[21px] bg-[#f0f0f0] pl-[11px]">
                            {['标准', '补充', '全部'].map((r) => (
                                <label key={r} className="flex items-center gap-2">
                                    <input
                                        type="radio"
                                        name="scope"
                                        defaultChecked={r === '全部'}
                                        className="size-[11px] appearance-none rounded-full border border-[#8a8a8a] bg-white checked:bg-black checked:shadow-[inset_0_0_0_2px_#fff]"
                                    />
                                    {r}
                                </label>
                            ))}
                        </div>
                    </div>
                </div>
                <div className="ml-1 flex-1 overflow-hidden border-t border-l border-[#a0a0a0] bg-white pt-px pl-px">
                    <QuotaTable />
                </div>
            </div>
        </div>
    );
}

const STATUS = [
    { text: '清单库: 工程量清单项目计量规范(2013-湖北)', w: 'w-[383px]' },
    { text: '定额库: 湖北省房屋建筑与装饰工程消耗量定额及基价表(2013)', w: 'w-[383px]' },
    { text: '定额专业: 建筑工程', w: 'flex-1' },
    { text: '当前分部: 砌筑工程', w: 'w-[177px]' },
    { text: '计税模式: 增值税(一般计税方法)', w: 'w-[188px]' },
];

function StatusBar() {
    return (
        <footer className="flex h-[21px] shrink-0 gap-px bg-[#f0f0f0] pr-px">
            {STATUS.map(({ text, w }) => (
                <div key={text} className={clsx('mt-px overflow-hidden border border-[#d9d9d9] bg-linear-to-b from-white to-[#f0f0f0] leading-[18px] whitespace-nowrap', w)}>
                    <Song>{text}</Song>
                </div>
            ))}
        </footer>
    );
}

const APPS = [
    { name: '任务视图', art: <path d="M7.5 5.5 H17.5 V18.5 H7.5 Z M5 7.5 H2.5 V16.5 H5 M20 7.5 H22.5 V16.5 H20" fill="none" stroke="#fff" strokeWidth="1.2" /> },
    {
        name: '风车',
        art: (
            <>
                <path d="M7 1 Q11 1 12 3 Q14 1 18 1 Q23 1 23 6 Q23 10 21 12 Q23 14 23 18 Q23 23 18 23 Q13 23 12 21 Q10 23 6 23 Q1 23 1 18 Q1 14 3 12 Q1 10 1 6 Q1 1 7 1 Z" fill="#e8e8e8" />
                <path d="M12 12 Q15 7 12 2 M12 12 Q17 15 22 12 M12 12 Q9 17 12 22 M12 12 Q7 9 2 12" fill="none" stroke="#030d12" strokeWidth="1.4" />
                <path d="M12 12 Q9 8 5 8 M12 12 Q16 9 16 5 M12 12 Q15 16 19 16 M12 12 Q8 15 8 19" fill="none" stroke="#030d12" strokeWidth="1" />
            </>
        ),
    },
    {
        name: '浏览器',
        art: (
            <g fill="none" stroke="#e8e8e8">
                <path d="M6 12.5 H19.5 C19.5 4 6 3 5 12.5 C5 20 16 22 19 16" strokeWidth="3.6" />
                <path d="M3 21 C0 17 12 5 21 3" strokeWidth="1.5" />
            </g>
        ),
    },
    {
        name: '助手',
        art: (
            <>
                <path d="M15 6 C9 2 2 7 3 14 C4 21 13 22 17 18 C20 14 16 9 12 11 C8 13 10 17 13 15 M12 8 C7 8 5 13 8 17" fill="none" stroke="#dcdcdc" strokeWidth="1.4" />
                <path d="M17 6 C17 -3 25 -3 25 6 L27 9 H15 Z" fill="#e8a209" />
                <circle cx="21" cy="10" r="1.5" fill="#e8a209" />
            </>
        ),
    },
    { name: 'Edge', art: <path d="M2 12 C3 0 22 -2 22 12 V14 H9 C9 20 17 20 20.5 17.5 V21.5 C12 25 3 21 4.5 14 C5.5 10 9 8 12 7.5 C10 8.5 9.5 9.5 9 11 H16 C16 5 7 5 2 12 Z" fill="#0f79d8" /> },
    {
        name: 'Internet Explorer',
        art: (
            <g fill="none">
                <path d="M7 13 H20 C20 5 7 4 6 13 C6 20 17 22 20 16.5" stroke="#5cb8f2" strokeWidth="3.8" />
                <path d="M3 22 C-1 18 12 3 20 2 C24 2 23 5 21.5 7.5" stroke="#f2c32c" strokeWidth="2" />
            </g>
        ),
    },
    {
        name: '文件资源管理器',
        art: (
            <>
                <path d="M2 4 H9 L11 6 H22 V20 H2 Z" fill="#f6d77a" />
                <path d="M2 8 H22 V20 H2 Z" fill="#fde69b" />
                <path d="M6 21 V14 H19 V21 H16 V17 H9 V21 Z" fill="#3a9fe0" />
            </>
        ),
    },
    {
        name: '广联达',
        run: true,
        art: (
            <>
                <path d="M23 1 C20 0 14 -1 9 2 C3 5 0 11 3 17 C6 23 15 25 20 21 C23 18 23 15 22 12 H14 C18 14 18 18 14 18.5 C9 19 7 14 9 10 C12 5 18 6 23 1 Z" fill="#1688e0" />
                <path d="M23 1 C17 3 11 2 7 7 C5 10 5 14 7 17 C6 12 8 8 12 6 C16 4 20 5 23 1 Z" fill="#5cc8f8" />
            </>
        ),
    },
    {
        name: '360浏览器',
        run: true,
        art: (
            <>
                <circle cx="12" cy="12" r="10.5" fill="#4fb92f" stroke="#e3f5dc" strokeWidth="1.4" />
                <path d="M7 13 H17 C17 6 8 6 7.5 12.5 C7.5 18 15 19 17 15.5" fill="none" stroke="#fff" strokeWidth="2.4" />
            </>
        ),
    },
    {
        name: '计价软件',
        run: true,
        active: true,
        art: (
            <>
                <rect x="0.5" y="0.5" width="23" height="23" rx="2" fill="#f5a01e" stroke="#ffcf7a" />
                <path d="M4 6 L15 4 L19 19 L6 21 Z" fill="#fff8e6" />
                <path d="M7 9 L13 8 M7.5 12 L14 11 M8 15 L14 14 M8.5 18 L15 17" stroke="#b5651a" />
                <path d="M21 2 L12 15 L11.5 18 L14 16.5 L23 4 Z" fill="#c2451a" />
            </>
        ),
    },
    {
        name: '图集',
        run: true,
        art: (
            <>
                <rect x="0.5" y="0.5" width="23" height="23" rx="3" fill="#1c6fc4" stroke="#0f4f96" />
                <path d="M3 8 L12 9.5 L21 8 V18 L12 19.5 L3 18 Z" fill="#f5f1e6" stroke="#b9c6d8" />
                <path d="M12 9.5 V19.5 M5 12 H10 M5 15 H10" stroke="#8aa3c4" />
                <circle cx="16" cy="8" r="4" fill="#bfe3fb" stroke="#e6f4ff" />
            </>
        ),
    },
    {
        name: '云对量',
        run: true,
        art: (
            <>
                <rect x="0.5" y="0.5" width="23" height="23" rx="4" fill="#0a8ff0" />
                <path d="M15.5 6.5 C14.5 4 11.5 4.5 11.5 7.5 V16 C11.5 20 8 20 7.5 17.5 M4.5 11 C4.5 13.5 6 13.5 8 13 H16 C18.5 13.5 20 12.5 19.5 10.5 M16 13 C18 13 17.5 16 16 16" fill="none" stroke="#fff" strokeWidth="1.8" />
            </>
        ),
    },
];

function Taskbar() {
    return (
        <div className="flex h-10 shrink-0 bg-[#030d12] text-[#e6e6e6]">
            <button type="button" aria-label="开始" className="flex w-12 items-center justify-center bg-black">
                <svg width="16" height="16" viewBox="0 0 16 16" fill="#fff" aria-hidden="true">
                    <path d="M0 2.3 L6.6 1.4 V7.6 H0 Z M7.4 1.3 L16 0 V7.6 H7.4 Z M0 8.4 H6.6 V14.6 L0 13.7 Z M7.4 8.4 H16 V16 L7.4 14.7 Z" />
                </svg>
            </button>
            <div className="flex w-[344px] items-center gap-[5px] bg-[#333333] pr-[14px] pl-[9px]">
                <svg width="22" height="22" viewBox="0 0 22 22" aria-hidden="true">
                    <circle cx="11" cy="11" r="9" fill="none" stroke="#f2f2f2" strokeWidth="2.6" />
                </svg>
                <input aria-label="搜索" placeholder="在这里输入你要搜索的内容" className="min-w-0 flex-1 bg-transparent text-[14px] placeholder:text-[#9a9a9a]" />
                <svg width="13" height="17" viewBox="0 0 13 17" fill="none" stroke="#a0a0a0" aria-hidden="true">
                    <rect x="4" y="0.5" width="5" height="10" rx="1" />
                    <path d="M1.5 7 V12.5 H11.5 V7 M6.5 12.5 V16 M3.5 16 H9.5" />
                </svg>
            </div>
            <div className="flex gap-[3px]">
                {APPS.map(({ name, art, run, active }) => (
                    <button
                        type="button"
                        key={name}
                        aria-label={name}
                        className={clsx('flex w-[47px] items-center justify-center border-b-2', active && 'bg-[#33414a]', run ? 'border-[#76b9ed]' : 'border-transparent')}
                    >
                        <svg width="24" height="24" viewBox="0 0 24 24" className="overflow-visible" aria-hidden="true">{art}</svg>
                    </button>
                ))}
            </div>
            <div className="ml-auto flex items-center">
                <span className="mr-2">链接</span>
                <svg width="14" height="8" viewBox="0 0 14 8" className="mr-[10px]" aria-hidden="true">
                    <path d="M1 7 L7 1 L13 7" fill="none" stroke="#fff" strokeWidth="1.3" />
                </svg>
                <svg width="17" height="14" viewBox="0 0 17 14" fill="none" stroke="#fff" className="mr-[10px]" aria-hidden="true">
                    <path d="M7 3.5 H15.5 V11.5 H5.5 V9 M1 3.5 H5 V6 Q3 8 1 6 Z M2 1 V3 M4 1 V3 M3 7 V10" />
                    <rect x="8" y="5.5" width="4" height="4" fill="#fff" />
                </svg>
                <svg width="14" height="14" viewBox="0 0 14 14" fill="none" stroke="#cfcfcf" className="mr-2" aria-hidden="true">
                    <path d="M1 13 Q2 3 13 1 M4 13 Q5 6 13 4.5 M7 13 Q8 9 13 8" />
                    <circle cx="11.5" cy="12" r="1.2" fill="#fff" />
                </svg>
                <svg width="16" height="14" viewBox="0 0 16 14" fill="none" stroke="#fff" className="mr-2" aria-hidden="true">
                    <path d="M1 5 H3.5 L7 1.5 V12.5 L3.5 9 H1 Z M9 5 Q10 7 9 9 M11 3.5 Q13 7 11 10.5" />
                    <path d="M13 1.5 Q16.5 7 13 12.5" stroke="#777" />
                </svg>
                <svg width="23" height="14" viewBox="0 0 23 14" fill="none" stroke="#fff" className="mr-[11px]" aria-hidden="true">
                    <rect x="0.5" y="1.5" width="22" height="11" />
                    <path d="M3 4.5 H20 M3 7 H20" strokeDasharray="2 1" />
                    <path d="M6 10 H17" />
                </svg>
                <span className="mr-[14px]">中</span>
                <svg width="16" height="16" viewBox="0 0 16 16" className="mr-4" aria-hidden="true">
                    <rect x="1" y="1" width="14" height="14" rx="2" fill="#f04e23" transform="rotate(-8 8 8)" />
                    <path d="M11.5 4.5 C7 4 4.5 5 5 6.7 C5.5 8.3 11.2 7.5 11 9.6 C10.8 11.6 7 11.5 4.5 11" fill="none" stroke="#fff" strokeWidth="1.9" />
                </svg>
                <div className="w-[60px] text-center leading-[19px] whitespace-nowrap">
                    <p>16:04</p>
                    <p>2018/5/24</p>
                </div>
            </div>
            <button type="button" aria-label="通知" className="flex w-[54px] items-center justify-center bg-black pl-[6px]">
                <svg width="26" height="26" viewBox="0 0 26 26" aria-hidden="true">
                    <path d="M1 3 H17 V15 H9 L6 18 V15 H1 Z" fill="#fff" />
                    <path d="M3.5 6.5 H14.5 M3.5 9 H14.5 M3.5 11.5 H11" stroke="#000" />
                    <circle cx="17.5" cy="17.5" r="7.5" fill="#2b2b2b" stroke="#777" />
                    <text x="17.5" y="21.5" textAnchor="middle" fontSize="11" fill="#fff">1</text>
                </svg>
            </button>
            <span className="w-px shrink-0 bg-[#5a5a5a]" />
            <span className="w-1 shrink-0 bg-black" />
        </div>
    );
}

export default function App() {
    return (
        <div className="relative flex h-screen flex-col overflow-hidden bg-[#f0f0f0] font-[family-name:'Noto_Sans','Noto_Sans_CJK_SC',sans-serif] text-[12px] leading-[16px] text-black">
            <TitleBar />
            <MenuBar />
            <MainToolbar />
            <main className="flex min-h-0 flex-1">
                <SideTabs />
                <SectionPanel />
                <div className="flex w-[7px] shrink-0 items-center justify-center">
                    <span className="h-[100px] w-[5px] border border-[#8a8a8a] bg-[#f8f8f8]" />
                </div>
                <div className="flex min-w-0 flex-1 flex-col">
                    <EditToolbar />
                    <PriceGrid />
                    <ResourcePanel />
                </div>
            </main>
            <StatusBar />
            <Taskbar />

            <QueryDialog />
            <ImeBar className="top-[24px] left-[662px] w-[206px]" />
            <ImeBar className="top-[101px] left-[728px] w-[206px]" />
            <div className="absolute -top-[31px] left-[1090px] z-30 flex size-[50px] items-end justify-center rounded-full border-2 border-[#c9d6c9] bg-[#3fbf52] pb-[2px] text-[11px] font-bold text-white shadow-[0_3px_6px_rgba(0,0,0,0.35)]">
                65
            </div>
            {/* hand-drawn marks */}
            <svg width="430" height="44" viewBox="0 0 430 44" fill="none" stroke="#f00" strokeWidth="3" className="pointer-events-none absolute top-[516px] left-[284px] z-30" aria-hidden="true">
                <ellipse cx="87.5" cy="28.5" rx="85" ry="13.5" />
                <ellipse cx="304.5" cy="18.5" rx="121" ry="13.5" />
            </svg>
        </div>
    );
}
